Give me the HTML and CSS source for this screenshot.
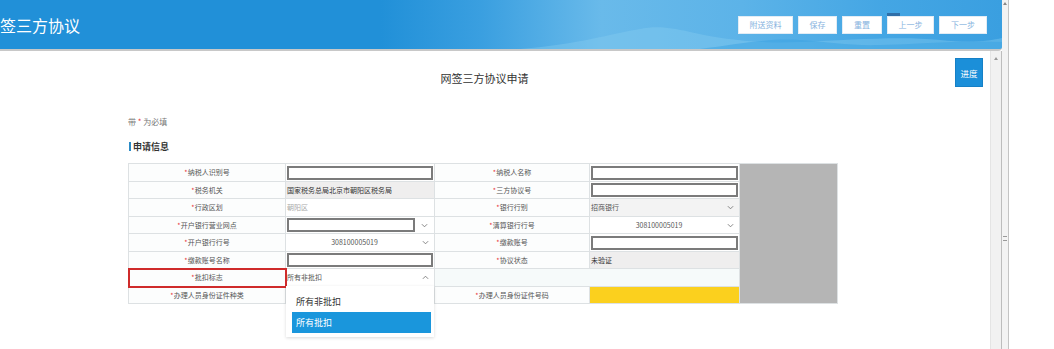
FILE: index.html
```html
<!DOCTYPE html>
<html lang="zh-CN">
<head>
    <meta charset="UTF-8">
    <meta name="viewport" content="width=device-width, initial-scale=1.0">
    <title>网签三方协议</title>
    <link rel="stylesheet" href="styles.css">
</head>
<body>
<div class="screen">
    <div class="app">
        <div class="topbar">
            <svg class="hills" viewBox="0 0 1002 49" preserveAspectRatio="none">
                <path d="M520 49 C580 44 610 34 640 29 C655 26 668 27 690 32 C720 39 760 44 800 42 C850 40 900 36 940 40 C970 43 990 41 1002 38 L1002 49 Z" fill="#86ccf1" opacity="0.4"/>
                <path d="M700 49 C740 44 770 38 800 40 C830 42 850 46 880 45 C920 44 960 40 1002 42 L1002 49 Z" fill="#3aa2e2" opacity="0.5"/>
            </svg>
            <div class="app-title">签三方协议</div>
            <div class="top-actions">
                <button class="top-btn btn-attach">附送资料</button>
                <button class="top-btn btn-save">保存</button>
                <button class="top-btn btn-reset">重置</button>
                <button class="top-btn btn-prev">上一步</button>
                <button class="top-btn btn-next">下一步</button>
            </div>
        </div>
        <div class="body-row">
            <div class="content">
                <div class="page-head">
                    <h1 class="page-title">网签三方协议申请</h1>
                    <button class="progress-btn">进度</button>
                </div>
                <div class="form-area">
                    <p class="required-note">带 <span class="req">*</span> 为必填</p>
                    <h2 class="section-title">申请信息</h2>
                    <table class="form-table">
                        <colgroup>
                            <col style="width:157px">
                            <col style="width:149px">
                            <col style="width:155px">
                            <col style="width:150px">
                            <col style="width:98px">
                        </colgroup>
                        <tr class="row-tall">
                            <td class="label"><span class="req">*</span>纳税人识别号</td>
                            <td class="field"><input class="text-input" type="text"></td>
                            <td class="label"><span class="req">*</span>纳税人名称</td>
                            <td class="field"><input class="text-input" type="text"></td>
                            <td class="filler" rowspan="8"></td>
                        </tr>
                        <tr>
                            <td class="label"><span class="req">*</span>税务机关</td>
                            <td class="readonly">国家税务总局北京市朝阳区税务局</td>
                            <td class="label"><span class="req">*</span>三方协议号</td>
                            <td class="field"><input class="text-input" type="text"></td>
                        </tr>
                        <tr class="row-tall">
                            <td class="label"><span class="req">*</span>行政区划</td>
                            <td class="muted">朝阳区</td>
                            <td class="label"><span class="req">*</span>银行行别</td>
                            <td class="select grey">
                                <div class="select-box"><span>招商银行</span>
                                    <svg class="chev" viewBox="0 0 8 5"><polyline points="1,1 4,4 7,1"/></svg></div>
                            </td>
                        </tr>
                        <tr>
                            <td class="label"><span class="req">*</span>开户银行营业网点</td>
                            <td class="field">
                                <div class="input-select"><input class="text-input" type="text">
                                    <svg class="chev" viewBox="0 0 8 5"><polyline points="1,1 4,4 7,1"/></svg></div>
                            </td>
                            <td class="label"><span class="req">*</span>清算银行行号</td>
                            <td class="select">
                                <div class="select-box centered"><span>308100005019</span>
                                    <svg class="chev" viewBox="0 0 8 5"><polyline points="1,1 4,4 7,1"/></svg></div>
                            </td>
                        </tr>
                        <tr class="row-tall">
                            <td class="label"><span class="req">*</span>开户银行行号</td>
                            <td class="select">
                                <div class="select-box centered"><span>308100005019</span>
                                    <svg class="chev" viewBox="0 0 8 5"><polyline points="1,1 4,4 7,1"/></svg></div>
                            </td>
                            <td class="label"><span class="req">*</span>缴款账号</td>
                            <td class="field"><input class="text-input" type="text"></td>
                        </tr>
                        <tr>
                            <td class="label"><span class="req">*</span>缴款账号名称</td>
                            <td class="field"><input class="text-input" type="text"></td>
                            <td class="label"><span class="req">*</span>协议状态</td>
                            <td class="readonly">未验证</td>
                        </tr>
                        <tr class="row-tall">
                            <td class="label flagged"><span class="req">*</span>批扣标志</td>
                            <td class="select open">
                                <div class="select-box"><span>所有非批扣</span>
                                    <svg class="chev" viewBox="0 0 8 5"><polyline points="1,4 4,1 7,4"/></svg></div>
                                <div class="dropdown">
                                    <div class="opt">所有非批扣</div>
                                    <div class="opt active">所有批扣</div>
                                </div>
                            </td>
                            <td class="blank" colspan="2"></td>
                        </tr>
                        <tr>
                            <td class="label"><span class="req">*</span>办理人员身份证件种类</td>
                            <td class="select"></td>
                            <td class="label"><span class="req">*</span>办理人员身份证件号码</td>
                            <td class="highlight"></td>
                        </tr>
                    </table>
                </div>
            </div>
            <div class="inner-scroll"></div>
        </div>
    </div>
    <div class="outer-scroll"><span class="grip"></span></div>
</div>
</body>
</html>
```

FILE: styles.css
```css
* {
    box-sizing: border-box;
}
html, body {
    margin: 0;
    padding: 0;
}
body {
    width: 1054px;
    height: 349px;
    overflow: hidden;
    background: #fff;
    font-family: "Noto Sans CJK SC", "Noto Sans", sans-serif;
}
.screen {
    display: flex;
    height: 349px;
}
.app {
    width: 1002px;
    display: flex;
    flex-direction: column;
}

/* header */
.topbar {
    position: relative;
    flex: none;
    height: 51px;
    display: flex;
    align-items: center;
    justify-content: space-between;
    overflow: hidden;
    background: linear-gradient(90deg, #2190d8 0%, #2190d8 38%, #3a9fe0 48%, #69baea 60%, #5cb3e8 74%, #44a6e4 88%, #3a9fe0 100%);
    border-bottom: 2px solid #c8c8c8;
    border-bottom-right-radius: 4px;
}
.hills {
    position: absolute;
    left: 0;
    top: 0;
    width: 100%;
    height: 49px;
}
.app-title {
    position: relative;
    color: #fff;
    font-size: 16px;
    line-height: 20px;
}
.top-actions {
    position: relative;
    display: flex;
    gap: 5px;
    margin-right: 15px;
}
.top-btn {
    position: relative;
    height: 18px;
    padding: 0;
    border: 1px solid #e2ecf5;
    background: #fff;
    color: #86b3de;
    font-family: inherit;
    font-size: 8px;
}
.btn-attach { width: 55px; }
.btn-save { width: 39px; }
.btn-reset { width: 40px; }
.btn-prev { width: 47px; }
.btn-next { width: 48px; }
.btn-prev::before {
    content: "";
    position: absolute;
    left: -1px;
    top: -4px;
    width: 13px;
    height: 3px;
    background: #2f6fa8;
}

/* body */
.body-row {
    flex: 1;
    display: flex;
    min-height: 0;
}
.content {
    width: 990px;
}
.page-head {
    display: flex;
    align-items: flex-start;
    padding: 7px 7px 0 0;
}
.page-title {
    flex: 1;
    margin: 13px 0 0;
    padding-left: 14px;
    text-align: center;
    font-size: 11px;
    line-height: 14px;
    font-weight: normal;
    color: #333;
}
.progress-btn {
    width: 28px;
    height: 29px;
    padding: 0;
    border: 1px solid #1680c6;
    background: #1b8fd9;
    color: #fff;
    font-family: inherit;
    font-size: 8.5px;
}
.form-area {
    padding-left: 128px;
}
.required-note {
    margin: 29px 0 0;
    font-size: 8px;
    line-height: 11px;
    color: #777;
}
.req {
    color: #e8333a;
}
.section-title {
    margin: 14px 0 0 1px;
    font-size: 9px;
    line-height: 12px;
    font-weight: bold;
    color: #333;
}
.section-title::before {
    content: "";
    display: inline-block;
    width: 2px;
    height: 9px;
    margin-right: 2px;
    vertical-align: -1px;
    background: #2b8bc6;
}

/* form table */
.form-table {
    margin-top: 10px;
    width: 709px;
    table-layout: fixed;
    border-collapse: collapse;
    font-size: 7px;
    line-height: 9px;
    color: #555;
}
.form-table tr {
    height: 17px;
}
.form-table tr.row-tall {
    height: 18px;
}
.form-table td {
    padding: 0;
    border: 1px solid #dde1e3;
    white-space: nowrap;
}
.label {
    text-align: center;
    background: #fcfdfd;
}
.flagged {
    outline: 2px solid #cf2b2b;
    outline-offset: -1px;
}
.field {
    padding: 1px !important;
}
.text-input {
    display: block;
    width: 100%;
    height: 14px;
    margin: 0;
    border: 2px solid #7b7b7b;
    background: #fff;
}
.input-select {
    display: flex;
    align-items: center;
    padding-right: 5px;
}
.input-select .text-input {
    flex: 1 1 0;
    min-width: 0;
    width: auto;
    margin-right: 6px;
}
.readonly {
    padding-left: 1px !important;
    background: #efeeee;
    color: #333;
}
.muted {
    padding-left: 1px !important;
    color: #aaa;
}
.select {
    position: relative;
}
.select.grey {
    background: #f3f3f3;
}
.select-box {
    display: flex;
    align-items: center;
    justify-content: space-between;
    padding: 0 5px 0 1px;
}
.select-box.centered span {
    flex: 1;
    text-align: center;
}
.chev {
    width: 7px;
    height: 5px;
    fill: none;
    stroke: #777;
    stroke-width: 1;
}
.blank {
    background: #f6fafa;
}
.filler {
    background: #b5b5b5;
}
.highlight {
    background: #fbd01e;
}

/* open select list */
.dropdown {
    position: absolute;
    left: 0;
    top: 100%;
    z-index: 5;
    width: 148px;
    padding: 6px 3px 4px 6px;
    background: #fff;
    box-shadow: 0 1px 3px rgba(0, 0, 0, 0.15);
    font-size: 9px;
}
.opt {
    height: 20px;
    line-height: 20px;
    padding-left: 4px;
    color: #333;
}
.opt.active {
    height: 21px;
    line-height: 21px;
    background: #1a96dc;
    color: #fff;
}

/* scrollbars */
.inner-scroll {
    position: relative;
    width: 12px;
    background: #f1f1f1;
    border-left: 1px solid #e4e4e4;
    border-right: 1px solid #bdbdbd;
}
.inner-scroll::before {
    content: "";
    position: absolute;
    left: 3px;
    top: 6px;
    border-left: 2px solid transparent;
    border-right: 2px solid transparent;
    border-bottom: 3px solid #999;
}
.outer-scroll {
    position: relative;
    width: 7px;
    background: #f3f3f3;
    border-right: 1px solid #c4c4c4;
}
.outer-scroll::before {
    content: "";
    position: absolute;
    left: 1px;
    top: 2px;
    border-left: 2px solid transparent;
    border-right: 2px solid transparent;
    border-bottom: 3px solid #888;
}
.grip {
    position: absolute;
    left: 1px;
    top: 236px;
    width: 4px;
    height: 5px;
    border-top: 1px solid #999;
    border-bottom: 1px solid #999;
}
```
